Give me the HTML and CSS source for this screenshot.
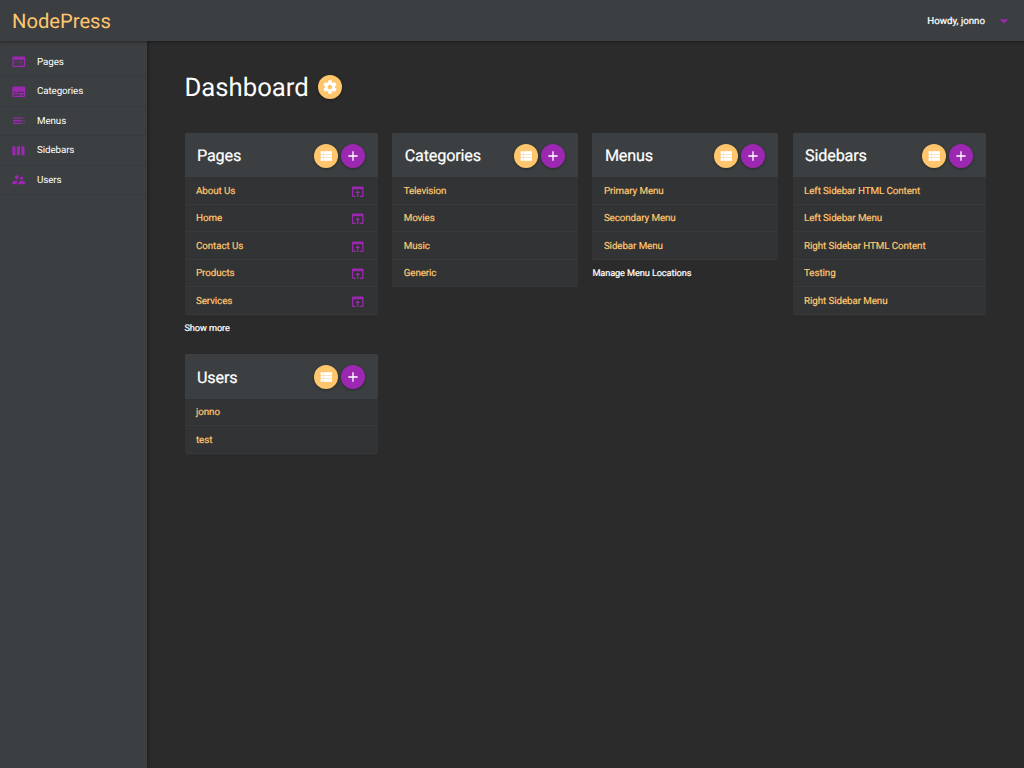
FILE: index.html
```html
<!DOCTYPE html>
<html lang="en">
<head>
<meta charset="utf-8">
<title>NodePress</title>
<link rel="stylesheet" href="styles.css">
</head>
<body>
<svg class="sprite" aria-hidden="true">
  <symbol id="web" viewBox="0 0 24 24"><path d="M20 4H4c-1.100 0-2 .9-2 2v12c0 1.100.9 2 2 2h16c1.100 0 2-.9 2-2V6c0-1.100-.9-2-2-2zm-5 14H4v-4h11v4zm0-5H4V9h11v4zm5 5h-4V9h4v9z"/></symbol>
  <symbol id="subtitles" viewBox="0 0 24 24"><path d="M20 4H4c-1.100 0-2 .9-2 2v12c0 1.100.9 2 2 2h16c1.100 0 2-.9 2-2V6c0-1.100-.9-2-2-2zM4 12h4v2H4v-2zm10 6H4v-2h10v2zm6 0h-4v-2h4v2zm0-4H10v-2h10v2z"/></symbol>
  <symbol id="toc" viewBox="0 0 24 24"><path d="M3 9h14V7H3v2zm0 4h14v-2H3v2zm0 4h14v-2H3v2zm16 0h2v-2h-2v2zm0-10v2h2V7h-2zm0 6h2v-2h-2v2z"/></symbol>
  <symbol id="week" viewBox="0 0 24 24"><path d="M6 5H3c-.55 0-1 .45-1 1v12c0 .55.45 1 1 1h3c.55 0 1-.45 1-1V6c0-.55-.45-1-1-1zm14 0h-3c-.55 0-1 .45-1 1v12c0 .55.45 1 1 1h3c.55 0 1-.45 1-1V6c0-.55-.45-1-1-1zm-7 0h-3c-.55 0-1 .45-1 1v12c0 .55.45 1 1 1h3c.55 0 1-.45 1-1V6c0-.55-.45-1-1-1z"/></symbol>
  <symbol id="people" viewBox="0 0 24 24"><path d="M16.500 12c1.380 0 2.490-1.120 2.490-2.500S17.880 7 16.500 7C15.120 7 14 8.120 14 9.500s1.120 2.500 2.500 2.500zM9 11c1.660 0 2.990-1.340 2.990-3S10.660 5 9 5C7.340 5 6 6.340 6 8s1.340 3 3 3zm7.500 3c-1.830 0-5.500.92-5.500 2.750V19h11v-2.250c0-1.830-3.670-2.750-5.500-2.750zM9 13c-2.330 0-7 1.170-7 3.500V19h7v-2.250c0-.85.33-2.340 2.370-3.470C10.500 13.100 9.660 13 9 13z"/></symbol>
  <symbol id="gear" viewBox="0 0 24 24"><path d="M19.430 12.980c.04-.32.07-.64.07-.98s-.03-.66-.07-.98l2.110-1.650c.19-.15.24-.42.12-.64l-2-3.460c-.12-.22-.39-.3-.61-.22l-2.490 1c-.52-.4-1.080-.73-1.690-.98l-.38-2.650C14.460 2.180 14.250 2 14 2h-4c-.25 0-.46.18-.49.42l-.38 2.650c-.61.25-1.170.59-1.690.98l-2.490-1c-.23-.09-.49 0-.61.22l-2 3.460c-.13.22-.07.49.12.64l2.110 1.650c-.04.32-.07.65-.07.98s.03.66.07.98l-2.110 1.650c-.19.15-.24.42-.12.64l2 3.460c.12.22.39.3.61.22l2.490-1c.52.4 1.080.73 1.690.98l.38 2.650c.03.24.24.42.49.42h4c.25 0 .46-.18.49-.42l.38-2.650c.61-.25 1.170-.59 1.690-.98l2.490 1c.23.09.49 0 .61-.22l2-3.460c.12-.22.07-.49-.12-.64l-2.110-1.650zM12 15.500c-1.930 0-3.500-1.570-3.500-3.500s1.570-3.500 3.500-3.500 3.500 1.570 3.500 3.500-1.570 3.500-3.500 3.500z"/></symbol>
  <symbol id="list" viewBox="0 0 24 24"><path opacity=".4" d="M4 5h17v14H4z"/><path d="M4 14h4v-4H4v4zm0 5h4v-4H4v4zM4 9h4V5H4v4zm5 5h12v-4H9v4zm0 5h12v-4H9v4zM9 5v4h12V5H9z"/></symbol>
  <symbol id="add" viewBox="0 0 24 24"><path d="M19 13h-6v6h-2v-6H5v-2h6V5h2v6h6v2z"/></symbol>
  <symbol id="open" viewBox="0 0 24 24"><path d="M19 4H5c-1.110 0-2 .9-2 2v12c0 1.100.89 2 2 2h4v-2H5V8h14v10h-4v2h4c1.100 0 2-.9 2-2V6c0-1.100-.89-2-2-2zm-7 6l-4 4h3v6h2v-6h3l-4-4z"/></symbol>
  <symbol id="drop" viewBox="0 0 24 24"><path d="M7 10l5 5 5-5z"/></symbol>
</svg>

<header class="topbar">
  <a class="brand">NodePress</a>
  <div class="account"><span class="hello">Howdy, jonno</span><svg class="caret"><use href="#drop"/></svg></div>
</header>

<div class="shell">
  <nav class="sidenav">
    <a class="nav-item"><svg class="nav-icon"><use href="#web"/></svg>Pages</a>
    <a class="nav-item"><svg class="nav-icon"><use href="#subtitles"/></svg>Categories</a>
    <a class="nav-item"><svg class="nav-icon"><use href="#toc"/></svg>Menus</a>
    <a class="nav-item"><svg class="nav-icon"><use href="#week"/></svg>Sidebars</a>
    <a class="nav-item"><svg class="nav-icon"><use href="#people"/></svg>Users</a>
  </nav>

  <main class="content">
    <div class="title-row">
      <h1 class="title">Dashboard</h1>
      <a class="fab"><svg class="fab-icon"><use href="#gear"/></svg></a>
    </div>

    <div class="grid">
      <section>
        <div class="card">
          <div class="card-head"><h2 class="card-title">Pages</h2><a class="fab"><svg class="fab-icon"><use href="#list"/></svg></a><a class="fab fab-add"><svg class="fab-icon"><use href="#add"/></svg></a></div>
          <div class="row">About Us<svg class="open"><use href="#open"/></svg></div>
          <div class="row">Home<svg class="open"><use href="#open"/></svg></div>
          <div class="row">Contact Us<svg class="open"><use href="#open"/></svg></div>
          <div class="row">Products<svg class="open"><use href="#open"/></svg></div>
          <div class="row">Services<svg class="open"><use href="#open"/></svg></div>
        </div>
        <a class="more">Show more</a>
      </section>
      <section>
        <div class="card">
          <div class="card-head"><h2 class="card-title">Categories</h2><a class="fab"><svg class="fab-icon"><use href="#list"/></svg></a><a class="fab fab-add"><svg class="fab-icon"><use href="#add"/></svg></a></div>
          <div class="row">Television</div>
          <div class="row">Movies</div>
          <div class="row">Music</div>
          <div class="row">Generic</div>
        </div>
      </section>
      <section>
        <div class="card">
          <div class="card-head"><h2 class="card-title">Menus</h2><a class="fab"><svg class="fab-icon"><use href="#list"/></svg></a><a class="fab fab-add"><svg class="fab-icon"><use href="#add"/></svg></a></div>
          <div class="row">Primary Menu</div>
          <div class="row">Secondary Menu</div>
          <div class="row">Sidebar Menu</div>
        </div>
        <a class="more">Manage Menu Locations</a>
      </section>
      <section>
        <div class="card">
          <div class="card-head"><h2 class="card-title">Sidebars</h2><a class="fab"><svg class="fab-icon"><use href="#list"/></svg></a><a class="fab fab-add"><svg class="fab-icon"><use href="#add"/></svg></a></div>
          <div class="row">Left Sidebar HTML Content</div>
          <div class="row">Left Sidebar Menu</div>
          <div class="row">Right Sidebar HTML Content</div>
          <div class="row">Testing</div>
          <div class="row">Right Sidebar Menu</div>
        </div>
      </section>
      <section>
        <div class="card">
          <div class="card-head"><h2 class="card-title">Users</h2><a class="fab"><svg class="fab-icon"><use href="#list"/></svg></a><a class="fab fab-add"><svg class="fab-icon"><use href="#add"/></svg></a></div>
          <div class="row">jonno</div>
          <div class="row">test</div>
        </div>
      </section>
    </div>
  </main>
</div>
</body>
</html>
```

FILE: styles.css
```css
* { box-sizing: border-box; }
body {
  margin: 0;
  height: 768px;
  display: flex;
  flex-direction: column;
  overflow: hidden;
  background: #2b2b2b;
  color: #fff;
  font-family: Roboto, sans-serif;
  font-size: 9.8px;
  text-rendering: geometricPrecision;
}
svg { display: block; fill: currentColor; flex: none; }
.sprite { display: none; }

.topbar {
  position: relative;
  z-index: 2;
  flex: none;
  height: 41px;
  padding: 0 10px 0 12px;
  display: flex;
  align-items: center;
  justify-content: space-between;
  background: #3c3f41;
  box-shadow: 0 1px 3px rgba(0, 0, 0, .4);
}
.brand { color: #ffc66d; font-size: 20.2px; }
.account { display: flex; align-items: center; gap: 9px; font-size: 9.7px; -webkit-text-stroke: .2px; }
.hello { padding-top: 1px; }
.caret { width: 20px; height: 20px; color: #9c27b0; }

.shell { flex: 1; display: flex; min-height: 0; }
.sidenav {
  width: 147px;
  flex: none;
  padding-top: 6.500px;
  background: #3c3f41;
  box-shadow: 1px 0 3px rgba(0, 0, 0, .35);
}
.nav-item {
  height: 29.500px;
  padding: 1px 0 0 10.500px;
  display: flex;
  align-items: center;
  gap: 11.500px;
  border-bottom: 1px solid #383b3d;
  letter-spacing: -.1px;
}
.nav-icon { width: 15.500px; height: 15.500px; margin: -.5px -.5px 0 0; color: #9c27b0; }

.content { flex: 1; padding: 31px 38px 0 37.500px; }
.title-row { display: flex; align-items: center; gap: 9.500px; height: 30px; }
.title { margin: 0; padding-top: 1px; font-size: 25.700px; font-weight: 400; line-height: 30px; }
.fab {
  width: 24px;
  height: 24px;
  flex: none;
  display: flex;
  align-items: center;
  justify-content: center;
  border-radius: 50%;
  background: #ffc66d;
  box-shadow: 0 1px 3px rgba(0, 0, 0, .35);
}
.fab-add { background: #9c27b0; }
.fab-icon { width: 16px; height: 16px; }

.grid {
  margin-top: 31.300px;
  display: grid;
  grid-template-columns: 193.500px 186px 186px 193.500px;
  gap: 20px 14.200px;
  align-items: start;
}
.card {
  border-radius: 2px;
  overflow: hidden;
  background: #313335;
}
.card-head {
  height: 44.200px;
  padding: 1px 13px 0 12.500px;
  display: flex;
  align-items: center;
  gap: 3.500px;
  background: #3c3f41;
}
.card-title { margin: 0; flex: 1; font-size: 16.200px; font-weight: 400; letter-spacing: -.17px; -webkit-text-stroke: .2px; }
.row {
  height: 27.500px;
  padding: 1.500px 13px 0 11.500px;
  display: flex;
  align-items: center;
  justify-content: space-between;
  border-bottom: 1px solid #37393b;
  color: #ffc66d;
  letter-spacing: -.09px;
  -webkit-text-stroke: .2px;
}
.open { width: 15.500px; height: 15.500px; color: #9c27b0; }
.more { display: block; padding-top: 8.200px; margin-bottom: -.7px; line-height: 12px; font-size: 9.200px; letter-spacing: -.1px; -webkit-text-stroke: .2px; }
```
